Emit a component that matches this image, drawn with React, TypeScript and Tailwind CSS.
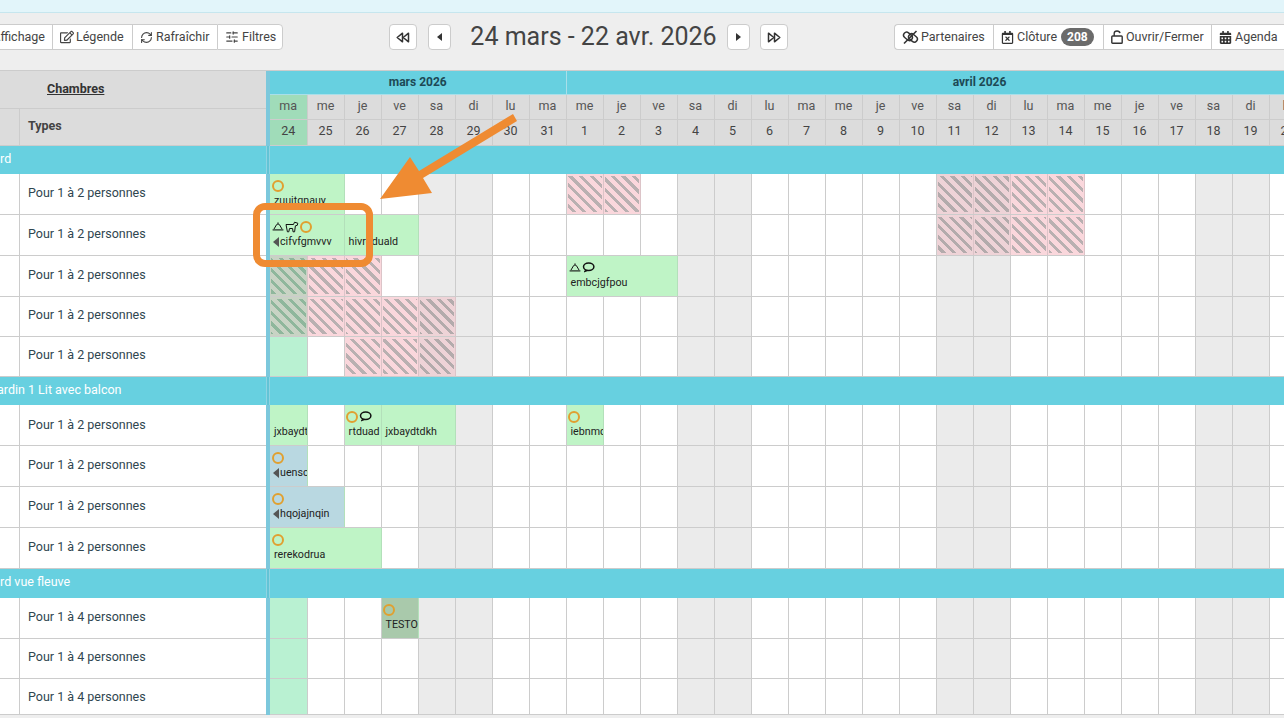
import React from "react";
import { FaRegEdit, FaRegCalendarTimes, FaCalendarAlt } from "react-icons/fa";
import { RefreshCw, SlidersHorizontal } from "lucide-react";

const dayNames = ["ma","me","je","ve","sa","di","lu","ma","me","je","ve","sa","di","lu","ma","me","je","ve","sa","di","lu","ma","me","je","ve","sa","di","lu","ma","me"];
const dayNums = [24,25,26,27,28,29,30,31,1,2,3,4,5,6,7,8,9,10,11,12,13,14,15,16,17,18,19,20,21,22];

const isWeekend = (i: number) => dayNames[i] === "sa" || dayNames[i] === "di";

type Booking = {
  start: number;
  span: number;
  label: string;
  color?: string;
  icons?: ("bell" | "dog" | "ring" | "comment")[];
  arrow?: boolean;
};

type Room = { h: string; label: string; labelClass?: string; hatch?: number[]; bookings?: Booking[] };

const GREEN = "bg-[#bff4c6]";
const BLUE = "bg-[#b9d8e1]";

const BellIcon = () => (
  <svg width="12" height="11" viewBox="0 0 12 11" fill="none" stroke="#111" strokeWidth="1">
    <path d="M2 8 L4.6 3.6 Q6 2.2 7.4 3.6 L10 8" strokeLinejoin="round" />
    <path d="M6 1.4 V2.8" />
    <path d="M0.6 8.9 H11.4" strokeWidth="1.1" />
  </svg>
);

const DogIcon = () => (
  <svg width="14" height="12" viewBox="0 0 14 12" fill="none" stroke="#111" strokeWidth="1">
    <path d="M1 3.5 H8.5 L9.5 1.2 L12.8 2.2 L12.3 4.3 L10.4 4.8 L9.6 10.8 H8 L7.6 7.5 H4.5 L3.8 10.8 H2.4 Z" strokeLinejoin="round" />
  </svg>
);

const CommentIcon = () => (
  <svg width="13" height="11" viewBox="0 0 13 11" fill="none" stroke="#111" strokeWidth="1.5">
    <ellipse cx="6.7" cy="4.7" rx="5.2" ry="3.7" />
    <path d="M3.6 7.8 L2.2 10 L5.8 8.6" strokeLinejoin="round" fill="#111" strokeWidth="0.8" />
  </svg>
);

const Ring = () => <span className="block w-[12px] h-[12px] -ml-[0.5px] rounded-full border-2 border-[#e0a030] shrink-0" />;

const BookingCell = ({ b }: { b: Booking }) => (
  <div
    className={`z-10 flex flex-col overflow-hidden pl-[2px] pt-[5px] self-stretch mb-[1px] border-r border-[#b3e0ba] ${b.color || GREEN}`}
    style={{ gridColumn: `${b.start + 1} / span ${b.span}`, gridRow: 1 }}
  >
    <div className="flex items-center gap-[1px] h-[13px] shrink-0">
      {b.icons?.map((ic, i) => (
        <span key={i} className="flex">
          {ic === "bell" && <BellIcon />}
          {ic === "dog" && <DogIcon />}
          {ic === "ring" && <Ring />}
          {ic === "comment" && <CommentIcon />}
        </span>
      ))}
    </div>
    <div className="flex items-center h-[15px] mt-[1px] text-[10.7px] leading-[15px] text-[#222] whitespace-nowrap pl-[2px]">
      {b.arrow && <span className="w-0 h-0 -ml-[1px] border-y-[5px] border-y-transparent border-r-[6px] border-r-[#555] mr-[1px] shrink-0" />}
      {b.label}
    </div>
  </div>
);

const HatchCell = ({ col }: { col: number }) => {
  const weekend = isWeekend(col);
  const outer = col === 0 ? "bg-[#c8d3c4]" : weekend ? "bg-[#eed3d7]" : "bg-[#fad7dc]";
  const inner =
    col === 0
      ? "bg-[repeating-linear-gradient(45deg,#c8d3c4_0px,#c8d3c4_4.5px,#8fb79c_4.5px,#8fb79c_7.5px)]"
      : weekend
      ? "bg-[repeating-linear-gradient(45deg,#eed3d7_0px,#eed3d7_4.5px,#b3abac_4.5px,#b3abac_7.5px)]"
      : "bg-[repeating-linear-gradient(45deg,#fad7dc_0px,#fad7dc_4.5px,#b9b0b1_4.5px,#b9b0b1_7.5px)]";
  return (
    <div className={`z-10 px-[1px] py-[2px] mb-[1px] border-r border-[#dcc4c8] ${outer}`} style={{ gridColumn: col + 1, gridRow: 1 }}>
      <div className={`w-full h-full bg-fixed ${inner}`} />
    </div>
  );
};

const RoomRow = ({ room }: { room: Room }) => (
  <div className={`flex ${room.h}`}>
    <div className="w-[266px] flex shrink-0 border-b border-[#cccccc] bg-white">
      <div className="w-[20px] border-r border-[#cccccc] shrink-0" />
      <div className={`flex-1 pl-[8px] flex items-center text-[12.5px] text-[#2f4650] ${room.labelClass ?? "pb-[2px]"}`}>{room.label}</div>
    </div>
    <div className="w-[4px] bg-[#7cc8dc] shrink-0" />
    <div className="grid grid-cols-[37.5px_repeat(29,37px)] shrink-0">
      {dayNames.map((_, i) => (
        <div
          key={i}
          className={`border-r border-b border-[#cccccc] ${
            i === 0 ? "bg-[#b9f1d2]" : isWeekend(i) ? "bg-[#ebebeb]" : "bg-white"
          }`}
          style={{ gridColumn: i + 1, gridRow: 1 }}
        />
      ))}
      {room.hatch?.map((c) => <HatchCell key={c} col={c} />)}
      {room.bookings?.map((b, i) => <BookingCell key={i} b={b} />)}
    </div>
  </div>
);

const GroupRow = ({ h, label }: { h: string; label: string }) => (
  <div className={`flex ${h} bg-[#67d0e0]`}>
    <div className="w-[266px] shrink-0 flex items-center overflow-hidden">
      <span className="-ml-[39px] text-[12.5px] text-white whitespace-nowrap pb-[2px]">{label}</span>
    </div>
    <div className="w-[4px] bg-[#62c4d6] border-x border-[#8fd4e2] shrink-0" />
    <div className="flex-1" />
  </div>
);

const ToolButton = ({ children, className = "" }: { children: React.ReactNode; className?: string }) => (
  <button className={`h-[26px] flex items-center bg-white border border-[#cccccc] text-[12.5px] text-[#444] whitespace-nowrap shrink-0 ${className}`}>
    {children}
  </button>
);

const NavButton = ({ children, className = "" }: { children: React.ReactNode; className?: string }) => (
  <button className={`h-[26px] flex items-center justify-center bg-white border border-[#cccccc] rounded-[4px] shrink-0 ${className}`}>
    {children}
  </button>
);

const DoubleArrow = ({ flip }: { flip?: boolean }) => (
  <svg width="14" height="11" viewBox="0 0 14 11" fill="none" stroke="#333" strokeWidth="1.5" strokeLinejoin="round" className={flip ? "rotate-180" : ""}>
    <path d="M6.5 1.2 L1.2 5.5 L6.5 9.8 Z" />
    <path d="M12.5 1.2 L7.2 5.5 L12.5 9.8 Z" />
  </svg>
);

const PartnerIcon = () => (
  <svg width="17" height="15" viewBox="0 0 17 15" fill="none" stroke="#333" strokeWidth="1.5">
    <rect x="1.2" y="3.4" width="9.5" height="6" rx="3" transform="rotate(40 6 6.4)" />
    <rect x="6.2" y="5" width="9.5" height="6" rx="3" transform="rotate(40 11 8)" />
    <path d="M2 13.5 L14.5 1" strokeWidth="1.6" />
  </svg>
);

const OpenLockIcon = () => (
  <svg width="12" height="14" viewBox="0 0 12 14" fill="none" stroke="#333" strokeWidth="1.4">
    <rect x="0.8" y="6" width="10.4" height="7.2" rx="0.8" />
    <path d="M3.2 6 V3.5 Q3.2 1 6 1 Q8.6 1 9 3.2" />
  </svg>
);

const rooms1: Room[] = [
  { h: "h-[41px]", label: "Pour 1 à 2 personnes", hatch: [8, 9, 18, 19, 20, 21], bookings: [{ start: 0, span: 2, label: "zuuitqnauy", icons: ["ring"] }] },
  {
    h: "h-[41px]",
    label: "Pour 1 à 2 personnes",
    hatch: [18, 19, 20, 21],
    bookings: [
      { start: 0, span: 2, label: "cifvfgmvvv", icons: ["bell", "dog", "ring"], arrow: true },
      { start: 2, span: 2, label: "hivrqduald" },
    ],
  },
  { h: "h-[41px]", label: "Pour 1 à 2 personnes", hatch: [0, 1, 2], bookings: [{ start: 8, span: 3, label: "embcjgfpou", icons: ["bell", "comment"] }] },
  { h: "h-[40px]", label: "Pour 1 à 2 personnes", hatch: [0, 1, 2, 3, 4] },
  { h: "h-[40px]", label: "Pour 1 à 2 personnes", hatch: [2, 3, 4] },
];

const rooms2: Room[] = [
  {
    h: "h-[41px]",
    label: "Pour 1 à 2 personnes",
    labelClass: "",
    bookings: [
      { start: 0, span: 1, label: "jxbaydtdkh" },
      { start: 2, span: 1, label: "rtduad", icons: ["ring", "comment"] },
      { start: 3, span: 2, label: "jxbaydtdkh" },
      { start: 8, span: 1, label: "iebnmqsv", icons: ["ring"] },
    ],
  },
  { h: "h-[41px]", label: "Pour 1 à 2 personnes", bookings: [{ start: 0, span: 1, label: "uenscqrt", color: BLUE, icons: ["ring"], arrow: true }] },
  { h: "h-[41px]", label: "Pour 1 à 2 personnes", bookings: [{ start: 0, span: 2, label: "hqojajnqin", color: BLUE, icons: ["ring"], arrow: true }] },
  { h: "h-[41px]", label: "Pour 1 à 2 personnes", bookings: [{ start: 0, span: 3, label: "rerekodrua", icons: ["ring"] }] },
];

const rooms3: Room[] = [
  { h: "h-[41px]", label: "Pour 1 à 4 personnes", bookings: [{ start: 3, span: 1, label: "TESTO", color: "bg-[#a9c9ab]", icons: ["ring"] }] },
  { h: "h-[40px]", label: "Pour 1 à 4 personnes" },
  { h: "h-[36px]", label: "Pour 1 à 4 personnes", labelClass: "pt-[2px]" },
];

export default function App() {
  return (
    <div className="relative w-[1284px] h-[718px] overflow-hidden bg-[#eeeeee] font-['Roboto',sans-serif]">
      {/* bandeau haut */}
      <div className="h-[13px] bg-[#e2f5fa] border-b border-[#c6e6ee]" />

      {/* barre d'outils */}
      <div className="h-[58px] bg-[#eeeeee] border-b border-[#cccccc] pt-[11px] flex items-start">
        <div className="w-[283px] flex justify-end overflow-hidden shrink-0">
          <ToolButton className="pr-[7px] pl-[20px] rounded-none border-r-0">Affichage</ToolButton>
          <ToolButton className="px-[7px] gap-[2px] w-[80px] border-r-0">
            <FaRegEdit size={14} className="shrink-0" /> Légende
          </ToolButton>
          <ToolButton className="px-[7px] gap-[3px] w-[85px] border-r-0">
            <RefreshCw size={13} className="shrink-0" /> Rafraîchir
          </ToolButton>
          <ToolButton className="px-[7px] gap-[3px] w-[66px] rounded-r-[4px]">
            <SlidersHorizontal size={14} className="shrink-0" /> Filtres
          </ToolButton>
        </div>
        <div className="ml-[106px] flex items-center h-[26px] shrink-0">
          <NavButton className="w-[28px]"><DoubleArrow /></NavButton>
          <NavButton className="w-[23px] ml-[11px]">
            <span className="w-0 h-0 border-y-[4.5px] border-y-transparent border-r-[5px] border-r-[#333]" />
          </NavButton>
          <div className="w-[276px] pl-[9px] text-center text-[25px] text-[#444] whitespace-nowrap">24 mars - 22 avr. 2026</div>
          <NavButton className="w-[23px]">
            <span className="w-0 h-0 border-y-[4.5px] border-y-transparent border-l-[5px] border-l-[#333]" />
          </NavButton>
          <NavButton className="w-[28px] ml-[10px]"><DoubleArrow flip /></NavButton>
        </div>
        <div className="ml-[106px] flex overflow-hidden shrink-0 w-[390px]">
          <ToolButton className="w-[99px] px-[7px] gap-[2px] rounded-l-[4px] border-r-0"><PartnerIcon /> Partenaires</ToolButton>
          <ToolButton className="w-[110px] px-[7px] gap-[3px] border-r-0">
            <FaRegCalendarTimes size={13} className="shrink-0 text-[#333]" /> Clôture
            <span className="ml-[1px] h-[18px] px-[6px] rounded-full bg-[#6b6b6b] text-white text-[12px] font-bold flex items-center">208</span>
          </ToolButton>
          <ToolButton className="w-[108px] px-[7px] gap-[3px] border-r-0"><OpenLockIcon /> Ouvrir/Fermer</ToolButton>
          <ToolButton className="w-[90px] px-[7px] gap-[3px]"><FaCalendarAlt size={13} className="shrink-0 text-[#333]" /> Agenda</ToolButton>
        </div>
      </div>

      {/* en-tête du planning */}
      <div className="flex h-[75px]">
        <div className="w-[266px] shrink-0 bg-[#dcdcdc] flex flex-col border-b border-[#cccccc]">
          <div className="h-[38px] border-b border-[#cccccc] flex items-center pl-[47px] shrink-0">
            <span className="text-[12.5px] font-bold text-[#333] underline">Chambres</span>
          </div>
          <div className="flex flex-1">
            <div className="w-[20px] border-r border-[#cccccc]" />
            <div className="pl-[8px] pb-[2px] flex items-center text-[12.5px] font-bold text-[#444]">Types</div>
          </div>
        </div>
        <div className="w-[4px] bg-[#7cc8dc] shrink-0" />
        <div className="grid grid-cols-[37.5px_repeat(29,37px)] grid-rows-[24px_25px_26px] shrink-0">
          <div className="col-span-8 bg-[#67d0e0] border-r border-b border-[#a9dfe9] flex items-center justify-center pb-[1px] text-[12px] font-bold text-[#1d4955]">mars 2026</div>
          <div className="col-span-22 bg-[#67d0e0] border-b border-[#a9dfe9] flex items-center justify-center pl-[12px] pb-[1px] text-[12px] font-bold text-[#1d4955]">avril 2026</div>
          {dayNames.map((d, i) => (
            <div key={i} className={`border-r border-b border-[#cccccc] flex items-center justify-center pb-[2px] text-[12.5px] text-[#555] ${i === 0 ? "bg-[#a0dcb9]" : "bg-[#dcdcdc]"}`}>{d}</div>
          ))}
          {dayNums.map((d, i) => (
            <div key={i} className={`border-r border-b border-[#cccccc] flex items-center justify-center pb-[2px] text-[12.5px] text-[#444] ${i === 0 ? "bg-[#a0dcb9]" : "bg-[#dcdcdc]"}`}>{d}</div>
          ))}
        </div>
      </div>

      {/* lignes */}
      <GroupRow h="h-[28px]" label="Standard" />
      {rooms1.map((r, i) => <RoomRow key={i} room={r} />)}
      <GroupRow h="h-[28px]" label="Côté Jardin 1 Lit avec balcon" />
      {rooms2.map((r, i) => <RoomRow key={i} room={r} />)}
      <GroupRow h="h-[29px]" label="Standard vue fleuve" />
      {rooms3.map((r, i) => <RoomRow key={i} room={r} />)}

      {/* annotations */}
      <div className="absolute left-[253px] top-[203px] w-[120px] h-[64px] border-[7px] border-[#ef8b32] rounded-[12px] z-20" />
      <svg className="absolute left-0 top-0 z-20 pointer-events-none" width="1284" height="718">
        <polygon points="380,199 410,157 419,171 513,114 517,121 423,178 432,193" fill="#ef8b32" />
      </svg>
    </div>
  );
}
